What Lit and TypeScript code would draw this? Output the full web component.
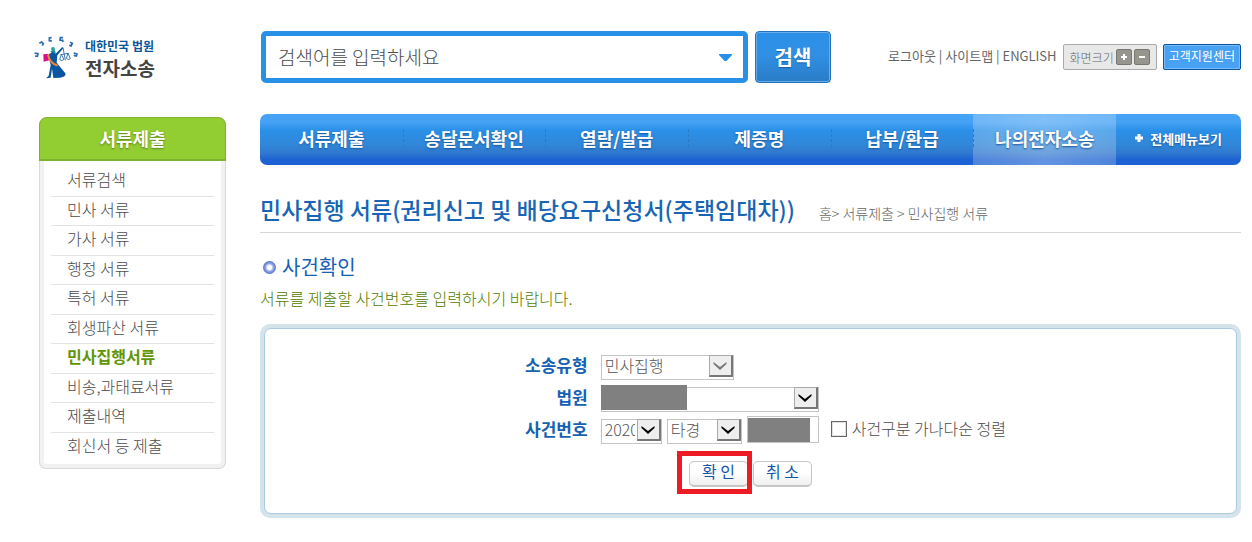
import { LitElement, html, css } from "lit";
import { customElement, property, state } from "lit/decorators.js";
import { classMap } from "lit/directives/class-map.js";

@customElement("court-logo")
class CourtLogo extends LitElement {
  static styles = css`
    :host { display: block; }
    .logo { display: flex; align-items: center; gap: 4px; padding-top: 4px; text-decoration: none; }
    .names { display: flex; flex-direction: column; white-space: nowrap; }
    .org { font-size: 12px; line-height: 20px; font-weight: 700; color: #0b5698; }
    .service { font-size: 19px; line-height: 23px; font-weight: 700; color: #444; }
    .emblem { display: block; flex: none; }
  `;
  render() {
    return html`
      <a class="logo" href="#">
        <svg class="emblem" width="47" height="45" viewBox="42 50 141 135" aria-hidden="true">
          <g fill="none" stroke="#2a6cab" stroke-width="5">
            <path d="M44 104l10 2-2 8-7-1M58 75l7-4 5 5-3 6M95 58l-7 1v8l8 1M129 58h-8l-1 7 8 1 1 5M150 72l7 3-4 8-5-3M161 104l10 3-2 6-8-2" />
          </g>
          <circle cx="99" cy="92" r="6" fill="#27ab94" />
          <path d="M91 99l12-4 5 9-9 6z" fill="#0d8f98" />
          <path d="M70 108l15-2 3 20-17 4z" fill="#d5108b" />
          <path d="M88 106q11-6 19 0l20-20 3 4-18 21-2 22 26 32q4 10-16 13l-20 1-4-28-4 27-14 2 8-8 6-32-6-24z" fill="#0a55a0" />
          <path d="M84 108q4 26 29 34" fill="none" stroke="#f08a30" stroke-width="6" />
          <path d="M129 88l7 38M121 109l25-4M124 109l-5 14q6 8 13 0zM144 105l-5 15q7 7 12 1z" fill="none" stroke="#3b7ab4" stroke-width="3" />
        </svg>
        <span class="names"><span class="org">대한민국 법원</span><span class="service">전자소송</span></span>
      </a>`;
  }
}

@customElement("side-menu")
class SideMenu extends LitElement {
  @property() heading = "";
  @property({ attribute: false }) items: string[] = [];
  @property() current = "";
  static styles = css`
    :host { display: block; }
    .heading {
      margin: 0; height: 44px; box-sizing: border-box; border: 1px solid #7fb32c; border-bottom-width: 2px;
      border-radius: 8px 8px 0 0; background: #92cd32; color: #fff; font-size: 18px; line-height: 40px;
      font-weight: 700; text-align: center; text-shadow: 0 1px 2px #587f1b;
    }
    .body { border: 1px solid #d9d9d9; border-top: 0; border-radius: 0 0 7px 7px; background: #f1f1f1; padding: 0 4px 4px; }
    .list { list-style: none; margin: 0; padding: 6px 7px 2px; background: #fff; border-radius: 0 0 3px 3px; }
    .item { box-sizing: border-box; height: 30px; border-bottom: 1px solid #e3e3e3; padding-left: 16px; line-height: 24px; }
    .item:nth-child(even) { height: 29px; }
    .item:last-child { border-bottom: 0; }
    .link { color: #4c4c4c; text-decoration: none; font-size: 16px; font-weight: 300; white-space: nowrap; }
    .link.current { color: #5f9608; font-weight: 700; }
  `;
  render() {
    return html`
      <h2 class="heading">${this.heading}</h2>
      <div class="body">
        <ul class="list">
          ${this.items.map((t) => html`<li class="item"><a href="#" class=${classMap({ link: true, current: t === this.current })}>${t}</a></li>`)}
        </ul>
      </div>`;
  }
}

@customElement("app-root")
class AppRoot extends LitElement {
  @state() sorted = false;

  static styles = css`
    :host {
      display: block; background: #fff; color: #4c4c4c; padding: 31px 11px 24px 34px;
      font-family: "Noto Sans CJK KR", sans-serif; font-size: 16px; font-weight: 300;
    }
    input, select, button { font: inherit; color: inherit; box-sizing: border-box; margin: 0; border-radius: 0; }
    .top { display: grid; grid-template-columns: 192px 1fr; column-gap: 35px; align-items: start; }
    .tools { display: flex; align-items: center; gap: 7px; }
    .search { display: flex; flex: 0 1 487px; box-sizing: border-box; height: 52px; border: 5px solid #2990e8; border-radius: 5px; background: #fff; }
    .query { flex: 1; min-width: 0; border: 0; outline: 0; padding: 0 12px 2px; font-size: 19px; background: transparent; }
    .query::placeholder { color: #4c4c4c; opacity: 1; }
    .open { border: 0; background: none; padding: 0 11px; display: flex; align-items: center; }
    .go {
      width: 76px; height: 52px; border: 1px solid #2672b8; border-radius: 4px; padding: 0 0 2px; color: #fff; font-size: 20px;
      font-weight: 700; background: linear-gradient(#2b8fe8, #3090e4 45%, #2a7cc6);
      box-shadow: inset 0 0 0 1px #66ade9; text-shadow: 0 1px 1px #1d5f9f;
    }
    .utility { margin-left: auto; display: flex; align-items: center; gap: 6px; white-space: nowrap; }
    .links { font-size: 13px; line-height: 20px; padding-bottom: 2px; font-weight: 400; color: #666; }
    .links a { color: inherit; text-decoration: none; }
    .zoom {
      display: flex; align-items: center; gap: 2px; height: 26px; box-sizing: border-box; border: 1px solid #aaa;
      border-radius: 2px; background: #e8e8e8; padding: 0 6px; font-size: 12px; color: #666;
    }
    .step { width: 16px; height: 16px; border: 1px solid #77776f; border-radius: 2px; background: #96968e; padding: 0; display: grid; place-items: center; }
    .help {
      height: 26px; border: 1px solid #0c569f; border-radius: 2px; background: #48a1f3; color: #fff; font-size: 12px; font-weight: 400;
      padding: 0 5px; box-sizing: border-box; line-height: 22px; text-decoration: none; box-shadow: inset 0 0 0 1px #79bafa;
    }
    .page { display: grid; grid-template-columns: 187px 1fr; column-gap: 34px; align-items: start; padding: 31px 0 0 5px; }
    .side { margin-top: 3px; }
    .nav {
      display: grid; grid-template-columns: repeat(6, 8fr) 7fr; height: 51px; border-radius: 7px; overflow: hidden;
      background: linear-gradient(#46a2f5, #46a2f5 16%, #2a90e8 32%, #3187d9 60%, #3079cf 76%, #1c62d2 90%);
    }
    .tab {
      display: flex; align-items: center; justify-content: center; padding-bottom: 3px; color: #fff; text-decoration: none; font-size: 18px; font-weight: 700;
      white-space: nowrap; text-shadow: 0 1px 2px #1c5699; position: relative;
    }
    .tab + .tab::before { content: ""; position: absolute; left: 0; top: 15px; height: 18px; border-left: 1px dashed #2b7ac4; }
    .tab.active { background: linear-gradient(90deg, #ffffff38, #ffffff50 50%, #ffffff38); }
    .tab.all { font-size: 13px; gap: 7px; }
    .tab.all::before { display: none; }
    .titlebar { display: flex; align-items: baseline; gap: 24px; margin-top: 28px; padding-bottom: 7px; border-bottom: 1px solid #d6d6d6; white-space: nowrap; }
    .title { margin: 0; font-size: 23px; line-height: 32px; font-weight: 500; color: #1765b4; }
    .crumbs { font-size: 14px; line-height: 20px; color: #666; }
    .crumbs a { color: inherit; text-decoration: none; }
    .section { display: flex; align-items: center; gap: 6px; margin: 20px 0 0 3px; font-size: 20px; line-height: 28px; font-weight: 400; color: #1461b3; }
    .bullet { width: 13px; height: 13px; border-radius: 50%; background: radial-gradient(circle, #fff 0 2px, #8fa5e8 4px, #4a64bb 7px); }
    .guide { margin: 4px 0 13px; line-height: 26px; color: #528000; }
    .panel { border: 4px solid #d5e3eb; border-radius: 10px; background: #d5e3eb; }
    .form { border: 1px solid #a9cbe0; border-radius: 7px; background: #fff; padding: 24px 0 26px 5px; }
    .fields { display: grid; grid-template-columns: 1fr 2fr; column-gap: 13px; row-gap: 7px; align-items: center; }
    .label { text-align: right; font-size: 17px; line-height: 23px; padding-bottom: 2px; font-weight: 700; color: #1461b3; white-space: nowrap; }
    .row { display: flex; align-items: center; gap: 5px; height: 25px; white-space: nowrap; }
    .pick { position: relative; display: block; height: 25px; }
    .pick select { appearance: none; width: 100%; height: 25px; border: 1px solid #c4c4c4; background: #fff; padding: 0 26px 4px 3px; font-size: 16px; line-height: 18px; color: #555; opacity: 1; }
    .arrow {
      position: absolute; right: 1px; top: 2px; width: 24px; height: 22px; box-sizing: border-box; border: 1px solid #aaa;
      border-right: 2px solid #777; border-bottom: 2px solid #777; background: #eee; display: grid; place-items: center; pointer-events: none;
    }
    .arrow path { fill: #000; }
    .arrow.off path { fill: #777; }
    .type { width: 133px; }
    .court { width: 218px; }
    .year { width: 61px; }
    .kind { width: 75px; }
    .serial { position: relative; display: block; width: 72px; height: 27px; }
    .serial input { width: 100%; height: 27px; border: 1px solid #c4c4c4; background: #fff; }
    .mask { position: absolute; background: #808080; }
    .court .mask { left: 0; top: 0; width: 86px; height: 25px; }
    .serial .mask { left: 1px; top: 2px; width: 62px; height: 24px; }
    .check { display: flex; align-items: center; gap: 5px; margin-left: 7px; line-height: 23px; padding-bottom: 2px; }
    .check input { appearance: none; width: 16px; height: 16px; border: 1px solid #666; background: #fff; box-shadow: inset 0 0 0 1px #e2e2e2; }
    .check input:checked { background: #1461b3; }
    .actions { display: flex; justify-content: center; gap: 5px; margin-top: 19px; padding-right: 5px; }
    .act { display: block; position: relative; }
    .btn {
      display: block; width: 59px; height: 26px; border: 1px solid #c6c6c6; border-bottom: 2px solid #c6c6c6; border-radius: 5px;
      background: linear-gradient(#fff, #fff 45%, #efefef); color: #1557a5; padding: 0 0 5px; line-height: 18px; font-weight: 400;
    }
    .mark { position: absolute; left: -12px; top: -10px; right: -4px; bottom: -7px; border: 5px solid #ed1c24; pointer-events: none; }
  `;

  private arrow(off = false) {
    return html`<span class=${classMap({ arrow: true, off })}><svg width="14" height="10" viewBox="0 0 14 10"><path d="M0.500 1v2l6.500 6 6.500-6V1L7 6z"></path></svg></span>`;
  }

  render() {
    const tabs = ["서류제출", "송달문서확인", "열람/발급", "제증명", "납부/환급", "나의전자소송"];
    const menu = ["서류검색", "민사 서류", "가사 서류", "행정 서류", "특허 서류", "회생파산 서류", "민사집행서류", "비송,과태료서류", "제출내역", "회신서 등 제출"];
    return html`
      <header class="top">
        <court-logo></court-logo>
        <div class="tools">
          <div class="search">
            <input class="query" type="text" placeholder="검색어를 입력하세요" aria-label="검색어" />
            <button class="open" type="button" aria-label="검색어 목록"><svg width="13" height="7" viewBox="0 0 13 7"><path d="M0 0h13v1L7.500 7h-2L0 1z" fill="#2990e8"></path></svg></button>
          </div>
          <button class="go" type="button">검색</button>
          <div class="utility">
            <span class="links"><a href="#">로그아웃</a> | <a href="#">사이트맵</a> | <a href="#">ENGLISH</a></span>
            <span class="zoom">화면크기
              <button class="step" type="button" aria-label="확대"><svg width="8" height="8" viewBox="0 0 8 8"><path d="M4 1v6M1 4h6" stroke="#fff" stroke-width="2"></path></svg></button>
              <button class="step" type="button" aria-label="축소"><svg width="8" height="8" viewBox="0 0 8 8"><path d="M1 4h6" stroke="#fff" stroke-width="2"></path></svg></button>
            </span>
            <a class="help" href="#">고객지원센터</a>
          </div>
        </div>
      </header>
      <div class="page">
        <side-menu class="side" heading="서류제출" current="민사집행서류" .items=${menu}></side-menu>
        <main>
          <nav class="nav">
            ${tabs.map((t) => html`<a href="#" class=${classMap({ tab: true, active: t === "나의전자소송" })}>${t}</a>`)}
            <a href="#" class="tab all"><svg width="8" height="8" viewBox="0 0 8 8"><path d="M4 0v8M0 4h8" stroke="#fff" stroke-width="3"></path></svg>전체메뉴보기</a>
          </nav>
          <div class="titlebar">
            <h1 class="title">민사집행 서류(권리신고 및 배당요구신청서(주택임대차))</h1>
            <span class="crumbs"><a href="#">홈</a>&gt; <a href="#">서류제출</a> &gt; <a href="#">민사집행 서류</a></span>
          </div>
          <h2 class="section"><span class="bullet"></span>사건확인</h2>
          <p class="guide">서류를 제출할 사건번호를 입력하시기 바랍니다.</p>
          <div class="panel">
            <form class="form">
              <div class="fields">
                <label class="label" for="type">소송유형</label>
                <div class="row"><span class="pick type"><select id="type" disabled><option>민사집행</option></select>${this.arrow(true)}</span></div>
                <label class="label" for="court">법원</label>
                <div class="row"><span class="pick court"><select id="court"><option></option></select>${this.arrow()}<span class="mask"></span></span></div>
                <label class="label" for="year">사건번호</label>
                <div class="row">
                  <span class="pick year"><select id="year"><option>2020</option></select>${this.arrow()}</span>
                  <span class="pick kind"><select aria-label="사건구분"><option>타경</option></select>${this.arrow()}</span>
                  <span class="serial"><input type="text" aria-label="일련번호" /><span class="mask"></span></span>
                  <label class="check"><input type="checkbox" .checked=${this.sorted} @change=${() => (this.sorted = !this.sorted)} />사건구분 가나다순 정렬</label>
                </div>
              </div>
              <div class="actions">
                <span class="act"><button class="btn" type="button">확 인</button><span class="mark"></span></span>
                <span class="act"><button class="btn" type="button">취 소</button></span>
              </div>
            </form>
          </div>
        </main>
      </div>`;
  }
}
